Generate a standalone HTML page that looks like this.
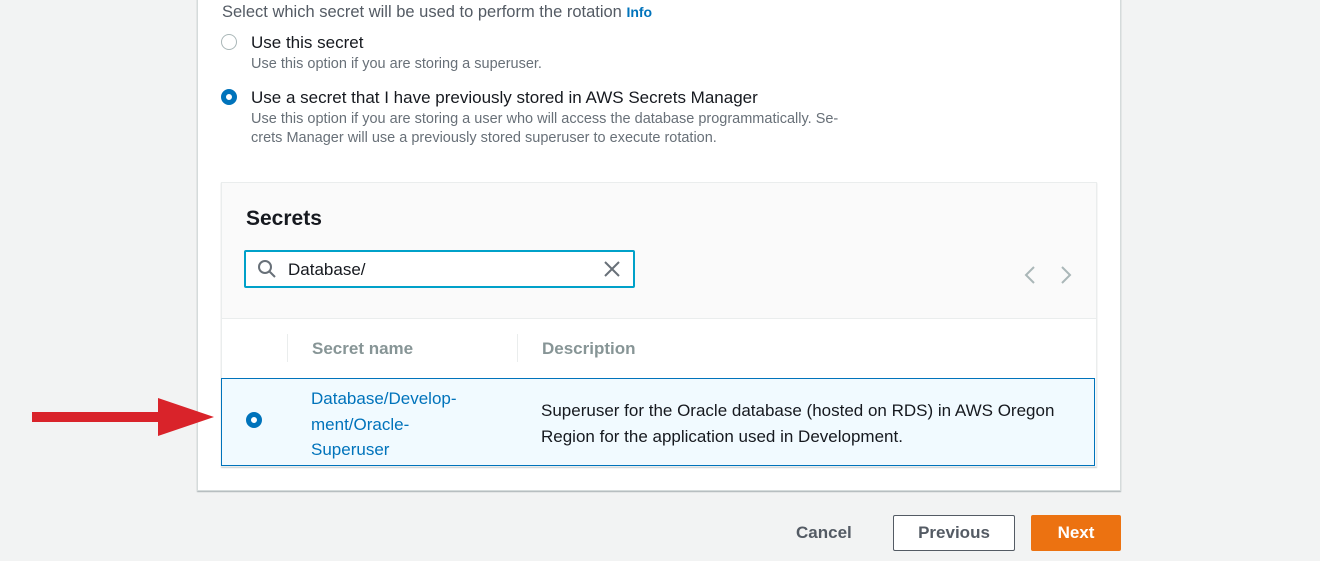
<!DOCTYPE html>
<html><head><style>
*{margin:0;padding:0;box-sizing:border-box}
body{width:1320px;height:561px;background:#f2f3f3;font-family:"Liberation Sans",sans-serif;position:relative;overflow:hidden;color:#16191f}
.a{position:absolute;white-space:nowrap}
.panel{position:absolute;left:197px;top:-2px;width:924px;height:493px;background:#fff;border:1px solid #d5dbdb;box-shadow:0 1px 1px rgba(0,28,36,.3)}
.radio{position:absolute;width:16px;height:16px;border-radius:50%}
.sub{color:#687078;font-size:14.5px}
</style></head><body>
<div class="panel"></div>
<div class="a" style="left:222px;top:3px;font-size:16.5px;color:#545b64">Select which secret will be used to perform the rotation <span style="color:#0073bb;font-size:14px;font-weight:bold">Info</span></div>
<div class="radio" style="left:221px;top:34px;border:1px solid #aab7b8"></div>
<div class="a" style="left:251px;top:33px;font-size:17px">Use this secret</div>
<div class="a sub" style="left:251px;top:56px">Use this option if you are storing a superuser.</div>
<div class="radio" style="left:221px;top:89px;border:5px solid #0073bb;background:#fff"></div>
<div class="a" style="left:251px;top:88px;font-size:17px">Use a secret that I have previously stored in AWS Secrets Manager</div>
<div class="a sub" style="left:251px;top:110px;line-height:19px">Use this option if you are storing a user who will access the database programmatically. Se-<br>crets Manager will use a previously stored superuser to execute rotation.</div>

<div style="position:absolute;left:221px;top:182px;width:876px;height:285px;background:#fafafa;border:1px solid #eaeded;box-shadow:0 1px 1px rgba(0,28,36,.2)"></div>
<div class="a" style="left:246px;top:207px;font-size:21px;font-weight:bold">Secrets</div>
<div style="position:absolute;left:244px;top:250px;width:391px;height:38px;border:2px solid #00a1c9;border-radius:2px;background:#fff"></div>
<svg class="a" style="left:257px;top:259px" width="20" height="20" viewBox="0 0 20 20"><circle cx="8" cy="8" r="6" fill="none" stroke="#687078" stroke-width="2"/><path d="M12.5 12.5L18 18" stroke="#687078" stroke-width="2"/></svg>
<div class="a" style="left:288px;top:260px;font-size:17px">Database/</div>
<svg class="a" style="left:603px;top:260px" width="18" height="18"><path d="M2 2L16 16M16 2L2 16" stroke="#687078" stroke-width="2"/></svg>
<svg class="a" style="left:1020px;top:264px" width="60" height="22"><path d="M14 3L6 11L14 19" fill="none" stroke="#aab7b8" stroke-width="2"/><path d="M42 3L50 11L42 19" fill="none" stroke="#aab7b8" stroke-width="2"/></svg>
<div style="position:absolute;left:222px;top:318px;width:874px;height:60px;background:#fff;border-top:1px solid #eaeded"></div>
<div style="position:absolute;left:287px;top:334px;width:1px;height:28px;background:#eaeded"></div>
<div style="position:absolute;left:517px;top:334px;width:1px;height:28px;background:#eaeded"></div>
<div class="a" style="left:312px;top:339px;font-size:17px;font-weight:bold;color:#879596">Secret name</div>
<div class="a" style="left:542px;top:339px;font-size:17px;font-weight:bold;color:#879596">Description</div>
<div style="position:absolute;left:221px;top:378px;width:874px;height:88px;background:#f1faff;border:1px solid #0073bb"></div>
<div class="radio" style="left:246px;top:412px;border:5px solid #0073bb;background:#fff"></div>
<div class="a" style="left:311px;top:386px;font-size:17px;line-height:25.5px;color:#0073bb">Database/Develop-<br>ment/Oracle-<br>Superuser</div>
<div class="a" style="left:541px;top:398px;font-size:17px;line-height:25.5px;color:#16191f">Superuser for the Oracle database (hosted on RDS) in AWS Oregon<br>Region for the application used in Development.</div>
<svg class="a" style="left:30px;top:396px" width="185" height="42"><rect x="2" y="16" width="130" height="10" fill="#d9232a"/><path d="M128 2L184 21L128 40Z" fill="#d9232a"/></svg>
<div class="a" style="left:796px;top:523px;font-size:17px;font-weight:bold;color:#545b64">Cancel</div>
<div style="position:absolute;left:893px;top:515px;width:122px;height:36px;border:1px solid #545b64;border-radius:2px;background:#fff"></div>
<div class="a" style="left:893px;top:523px;width:122px;text-align:center;font-size:17px;font-weight:bold;color:#545b64">Previous</div>
<div style="position:absolute;left:1031px;top:515px;width:90px;height:36px;background:#ec7211;border-radius:2px"></div>
<div class="a" style="left:1031px;top:523px;width:90px;text-align:center;font-size:17px;font-weight:bold;color:#fff">Next</div>
</body></html>
